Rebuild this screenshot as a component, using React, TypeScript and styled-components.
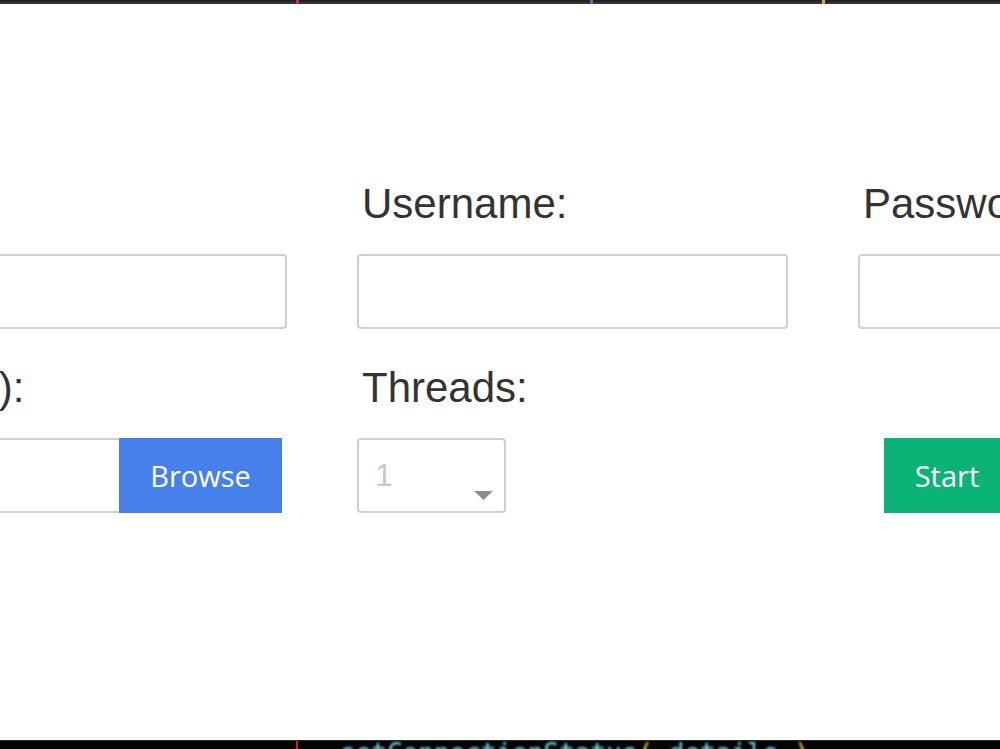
import React from 'react'
import styled, { createGlobalStyle } from 'styled-components'

const GlobalStyle = createGlobalStyle`
  html, body {
    margin: 0;
    padding: 0;
    background: #ffffff;
  }
  * {
    box-sizing: border-box;
  }
`

const Frame = styled.div`
  width: 1000px;
  height: 749px;
  display: flex;
  flex-direction: column;
  overflow: hidden;
  background: #ffffff;
`

const TopBar = styled.div`
  height: 4px;
  flex: none;
  display: flex;
  background: linear-gradient(#1e1e1e, #3a3a3a);
`

const Tick = styled.span<{ $x: number; $color: string }>`
  width: 3px;
  height: 100%;
  margin-left: ${p => p.$x}px;
  background: ${p => p.$color};
`

const Content = styled.main`
  flex: 1;
  overflow: hidden;
  padding-top: 175px;
`

const FormGrid = styled.div`
  display: grid;
  grid-template-columns: repeat(3, 431px);
  column-gap: 70px;
  row-gap: 34px;
  margin-left: -144px;
  width: 1433px;
`

const Field = styled.div<{ $indent?: number }>`
  display: flex;
  flex-direction: column;
  justify-content: flex-end;
  gap: 25px;
  padding-left: ${p => p.$indent || 0}px;
`

const Label = styled.label`
  font-family: 'Liberation Sans', Arial, sans-serif;
  font-size: 42px;
  line-height: 50px;
  color: #333333;
  padding-left: 5px;
  white-space: nowrap;
`

const TextInput = styled.input`
  height: 75px;
  width: 100%;
  border: 2px solid #cfcfcf;
  border-radius: 4px;
  background: #ffffff;
  font-family: 'Liberation Sans', Arial, sans-serif;
  font-size: 30px;
  padding: 0 18px;
  outline: none;
`

const FileGroup = styled.div`
  display: flex;
  height: 75px;
  width: calc(100% - 5px);
`

const FileInput = styled.input`
  flex: 1;
  min-width: 0;
  height: 100%;
  border: 2px solid #cfcfcf;
  border-right: none;
  border-radius: 4px 0 0 4px;
  background: #ffffff;
  outline: none;
`

const ActionButton = styled.button<{ $color: string; $width: number }>`
  height: 75px;
  width: ${p => p.$width}px;
  flex: none;
  border: none;
  border-radius: 0;
  background: ${p => p.$color};
  color: #ffffff;
  font-family: 'Open Sans', 'Noto Sans', sans-serif;
  font-size: 29px;
  padding: 0;
  cursor: pointer;
`

const SelectBox = styled.div`
  width: 149px;
  height: 75px;
  border: 2px solid #cfcfcf;
  border-radius: 4px;
  display: flex;
  align-items: center;
  padding: 0 11px 11px 16px;
  font-family: 'Liberation Sans', Arial, sans-serif;
  font-size: 32px;
  color: #cbc6c8;
`

const SelectValue = styled.span`
  padding-top: 11px;
`

const Caret = styled.svg`
  margin-left: auto;
  align-self: flex-end;
`

const BottomBar = styled.div`
  height: 9px;
  flex: none;
  display: flex;
  background: #050505;
  border-top: 1px solid #2a2a2a;
  overflow: hidden;
`

const Gutter = styled.span`
  width: 2px;
  margin-left: 296px;
  background: #d0202a;
  flex: none;
`

const CodeLine = styled.span`
  margin-left: 42px;
  font-family: 'DejaVu Sans Mono', monospace;
  font-size: 26px;
  line-height: 24px;
  color: #6fd0e8;
  white-space: pre;
  filter: blur(1px);
`

const Paren = styled.span`
  color: #e8c040;
`

export default function App() {
  return (
    <>
      <GlobalStyle />
      <Frame>
        <TopBar>
          <Tick $x={296} $color="#c8323a" />
          <Tick $x={291} $color="#4a78c8" />
          <Tick $x={229} $color="#d8a838" />
        </TopBar>
        <Content>
          <FormGrid>
            <Field>
              <Label>Server:</Label>
              <TextInput />
            </Field>
            <Field>
              <Label>Username:</Label>
              <TextInput />
            </Field>
            <Field>
              <Label>Password:</Label>
              <TextInput type="password" />
            </Field>

            <Field>
              <Label>File (txt):</Label>
              <FileGroup>
                <FileInput />
                <ActionButton $color="#4680ea" $width={163}>Browse</ActionButton>
              </FileGroup>
            </Field>
            <Field>
              <Label>Threads:</Label>
              <SelectBox>
                <SelectValue>1</SelectValue>
                <Caret width="19" height="9" viewBox="0 0 19 9">
                  <path d="M0 0 H19 L9.5 9 Z" fill="#8c8c8c" />
                </Caret>
              </SelectBox>
            </Field>
            <Field $indent={26}>
              <ActionButton $color="#0bb476" $width={126}>Start</ActionButton>
            </Field>
          </FormGrid>
        </Content>
        <BottomBar>
          <Gutter />
          <CodeLine>
            setConnectionStatus<Paren>(</Paren> details <Paren>)</Paren>
          </CodeLine>
        </BottomBar>
      </Frame>
    </>
  )
}
